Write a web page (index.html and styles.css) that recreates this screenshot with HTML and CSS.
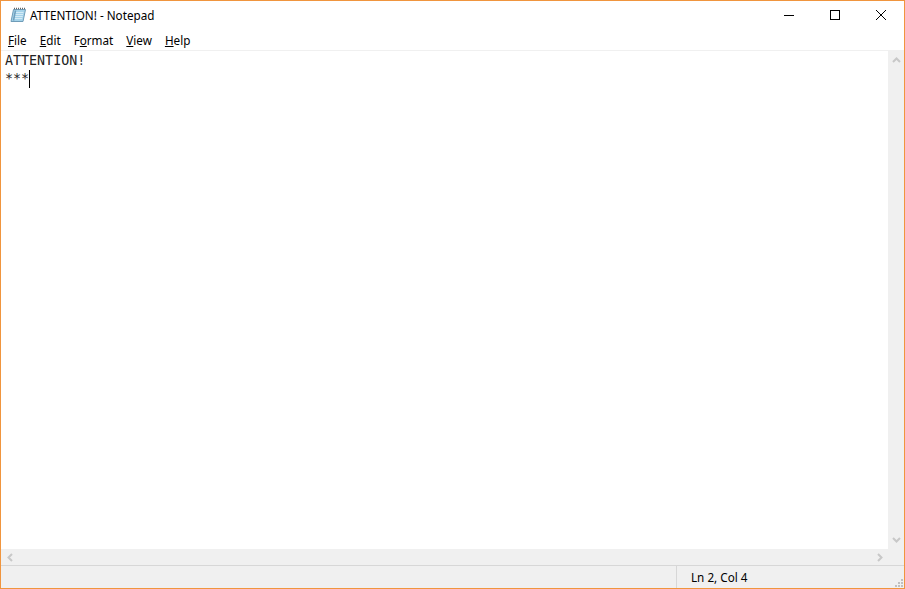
FILE: index.html
```html
<!DOCTYPE html>
<html lang="en">
<head>
<meta charset="utf-8">
<title>ATTENTION! - Notepad</title>
<link rel="stylesheet" href="styles.css">
</head>
<body>
<div class="window">
  <header class="titlebar">
    <svg class="app-icon" width="16" height="16" viewBox="0 0 16 16">
      <path d="M3.500 2.500h12L13 14.500H1z" fill="#a5d3ea" stroke="#6f9cb8" stroke-width="1"/>
      <path d="M4.500 5.500h9M4 7.500h9M3.700 9.500h9M3.200 11.500h9" stroke="#d5ebf6" stroke-width="1"/>
      <path d="M3.500 13.500L5.500 3.500" stroke="#6f9fbd" stroke-width="1.500"/>
      <path d="M4 1.500h11" stroke="#666" stroke-width="1.500" stroke-dasharray="1 1"/>
    </svg>
    <span class="title">ATTENTION! - Notepad</span>
    <div class="controls">
      <button class="control" aria-label="Minimize"><svg width="10" height="10" viewBox="0 0 10 10"><path d="M0 5.500h10" stroke="#000"/></svg></button>
      <button class="control" aria-label="Maximize"><svg width="10" height="10" viewBox="0 0 10 10"><rect x=".5" y=".5" width="9" height="9" fill="none" stroke="#000"/></svg></button>
      <button class="control" aria-label="Close"><svg width="10" height="10" viewBox="0 0 10 10"><path d="M0 0l10 10M10 0L0 10" stroke="#000" stroke-width="1"/></svg></button>
    </div>
  </header>
  <nav class="menubar">
    <span class="menu"><u>F</u>ile</span>
    <span class="menu"><u>E</u>dit</span>
    <span class="menu">F<u>o</u>rmat</span>
    <span class="menu"><u>V</u>iew</span>
    <span class="menu"><u>H</u>elp</span>
  </nav>
  <div class="editor-row">
    <main class="editor">
      <div class="line">ATTENTION!</div>
      <div class="line">***<span class="caret"></span></div>
    </main>
    <aside class="vscroll">
      <svg width="9" height="6" viewBox="0 0 9 6"><path d="M1 5l3.500-3.500L8 5" fill="none" stroke="#c8c8c8" stroke-width="2"/></svg>
      <svg width="9" height="6" viewBox="0 0 9 6"><path d="M1 1l3.500 3.500L8 1" fill="none" stroke="#c8c8c8" stroke-width="2"/></svg>
    </aside>
  </div>
  <div class="hscroll">
    <svg width="6" height="9" viewBox="0 0 6 9"><path d="M5 1L1.500 4.500 5 8" fill="none" stroke="#c8c8c8" stroke-width="2"/></svg>
    <svg width="6" height="9" viewBox="0 0 6 9"><path d="M1 1l3.500 3.500L1 8" fill="none" stroke="#c8c8c8" stroke-width="2"/></svg>
  </div>
  <footer class="statusbar">
    <div class="status-spacer"></div>
    <div class="status-pos">Ln 2, Col 4</div>
    <svg class="grip" width="9" height="9" viewBox="0 0 9 9" fill="#c0c0c0">
      <rect x="6" y="0" width="2" height="2"/>
      <rect x="3" y="3" width="2" height="2"/><rect x="6" y="3" width="2" height="2"/>
      <rect x="0" y="6" width="2" height="2"/><rect x="3" y="6" width="2" height="2"/><rect x="6" y="6" width="2" height="2"/>
    </svg>
  </footer>
</div>
</body>
</html>
```
FILE: styles.css
```css
* { box-sizing: border-box; }
html, body { margin: 0; height: 100%; }
body { font-family: "Noto Sans", "Open Sans", sans-serif; font-size: 11.7px; color: #000; overflow: hidden; background: #fff; }
.window { width: 905px; height: 589px; border: 1px solid #f0953e; display: flex; flex-direction: column; background: #fff; }
.titlebar { height: 30px; display: flex; align-items: center; padding: 0 0 2px 9px; flex: none; }
.app-icon { flex: none; margin-right: 4px; }
.title { flex: 1; font-size: 11.7px; color: #000; }
.controls { display: flex; align-self: stretch; }
.control { width: 46px; padding: 0; border: 0; background: none; display: flex; align-items: center; justify-content: center; }
.menubar { height: 19px; display: flex; gap: 13px; padding: 0 0 1px 7px; flex: none; align-items: center; }
.menu { font-size: 11.7px; color: #000; }
.menu u { text-underline-offset: 1px; }
.editor-row { flex: 1; display: flex; border-top: 1px solid #f0f0f0; min-height: 0; }
.editor { flex: 1; padding: 1px 0 0 4px; font-family: "DejaVu Sans Mono", monospace; font-size: 13.33px; line-height: 18px; color: #222; }
.line { height: 18px; display: flex; align-items: stretch; }
.caret { width: 1px; background: #000; }
.vscroll { width: 16px; flex: none; background: #f0f0f0; display: flex; flex-direction: column; justify-content: space-between; align-items: center; padding: 6px 0; }
.hscroll { height: 16px; flex: none; background: #f0f0f0; display: flex; justify-content: space-between; align-items: center; padding: 0 21px 0 6px; }
.statusbar { height: 23px; flex: none; background: #f0f0f0; border-top: 1px solid #d7d7d7; display: flex; align-items: stretch; position: relative; }
.status-spacer { width: 676px; border-right: 1px solid #d7d7d7; }
.status-pos { padding: 2px 0 0 14px; font-size: 11.7px; line-height: 18px; }
.grip { position: absolute; right: 0; bottom: 0; }
```
